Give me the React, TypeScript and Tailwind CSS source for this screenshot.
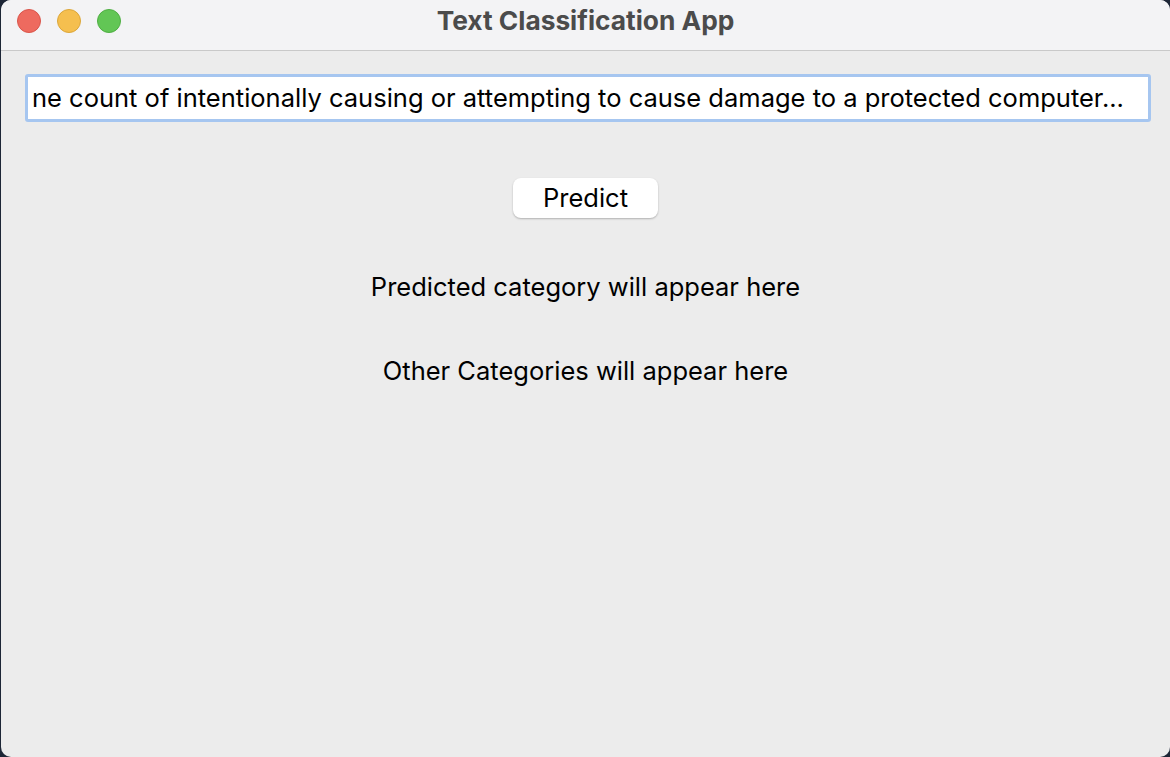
export default function App() {
  const text =
    "ne count of intentionally causing or attempting to cause damage to a protected computer..."

  return (
    <div className="w-[1170px] h-[757px] bg-[#1d2636] overflow-hidden" style={{ fontFamily: "Inter, 'Noto Sans', sans-serif" }}>
      <div className="ml-[1px] w-[1169px] h-[757px] rounded-[10px] overflow-hidden bg-[#ececec] flex flex-col">
        {/* Title bar */}
        <div className="h-[51px] shrink-0 bg-[#f3f3f5] border-b border-[#c9c9c9] flex items-start relative">
          <div className="flex gap-[16px] pl-[16px] pt-[9px]">
            <span className="w-[24px] h-[24px] rounded-full bg-[#ee6a5f] border border-[#d9554b]" />
            <span className="w-[24px] h-[24px] rounded-full bg-[#f5bf4f] border border-[#dba63a]" />
            <span className="w-[24px] h-[24px] rounded-full bg-[#62c655] border border-[#4fae43]" />
          </div>
          <div className="absolute inset-x-0 top-[5px] text-center text-[26.3px] leading-[32px] font-bold text-[#4b4b4b]">
            Text Classification App
          </div>
        </div>

        {/* Body */}
        <div className="flex flex-col items-center px-[24px] pt-[23px]">
          <div className="self-start shrink-0 w-[1126px] h-[48px] bg-white border-[3px] border-[#a6c6f0] rounded-[3px] flex items-center pl-[4px] overflow-hidden">
            <span className="whitespace-nowrap text-[25.5px] leading-[32px] text-black">{text}</span>
          </div>

          <button className="mt-[56px] w-[145px] h-[40px] bg-white rounded-[8px] shadow-[0_1px_2px_rgba(0,0,0,0.25)] text-[25.5px] leading-[32px] text-black">
            Predict
          </button>

          <div className="mt-[53px] text-[25.5px] leading-[32px] text-black">Predicted category will appear here</div>
          <div className="mt-[52px] text-[25.5px] leading-[32px] text-black">Other Categories will appear here</div>
        </div>
      </div>
    </div>
  )
}
